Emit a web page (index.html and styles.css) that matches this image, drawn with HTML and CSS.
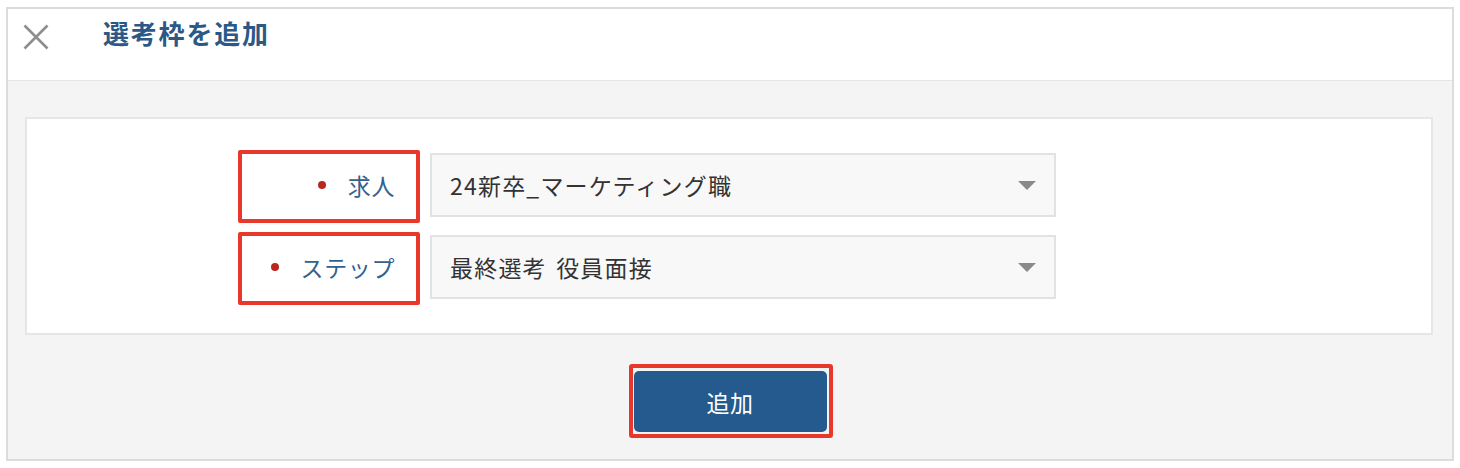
FILE: index.html
```html
<!DOCTYPE html>
<html lang="ja">
<head>
<meta charset="utf-8">
<link rel="stylesheet" href="styles.css">
</head>
<body>
<div class="modal">
  <div class="modal-header">
    <button class="close" aria-label="閉じる">
      <svg width="26" height="26" viewBox="0 0 26 26"><path d="M1.5 1.5 L24.5 24.5 M24.5 1.5 L1.5 24.5" stroke="#8e8e8e" stroke-width="2.6" fill="none"/></svg>
    </button>
    <h1 class="title">選考枠を追加</h1>
  </div>
  <div class="modal-body">
    <div class="card">
      <div class="row">
        <div class="label annotated"><span class="dot"></span>求人</div>
        <div class="select"><span class="value">24新卒_マーケティング職</span><span class="arrow"></span></div>
      </div>
      <div class="row">
        <div class="label annotated"><span class="dot"></span>ステップ</div>
        <div class="select"><span class="value">最終選考 役員面接</span><span class="arrow"></span></div>
      </div>
    </div>
    <div class="actions">
      <button class="submit">追加</button>
    </div>
  </div>
</div>
</body>
</html>
```
FILE: styles.css
```css
* { box-sizing: border-box; }
html, body { margin: 0; padding: 0; background: #fff; }
body {
  padding: 7px 6px;
  font-family: "Noto Sans CJK JP", "Noto Sans", sans-serif;
}
.modal {
  border: 2px solid #dcdcdc;
  background: #fff;
}
.modal-header {
  height: 72px;
  border-bottom: 1px solid #e4e4e4;
  display: flex;
  align-items: flex-start;
  background: #fff;
}
.close {
  margin: 15px 0 0 15px;
  padding: 0;
  width: 26px;
  height: 26px;
  border: none;
  background: none;
  display: block;
}
.close svg { display: block; }
.title {
  margin: 6px 0 0 54px;
  font-size: 26px;
  line-height: 36px;
  font-weight: 700;
  letter-spacing: 1.8px;
  color: #2b5886;
}
.modal-body {
  background: #f4f4f4;
  padding: 36px 19px 27px 17px;
}
.card {
  background: #fff;
  border: 2px solid #e6e6e6;
  padding: 34px 0 34px 211px;
  display: flex;
  flex-direction: column;
  gap: 18px;
}
.row {
  display: flex;
  align-items: stretch;
}
.label {
  width: 182px;
  height: 64px;
  display: flex;
  align-items: center;
  justify-content: flex-end;
  padding-right: 25px;
  font-size: 23px;
  letter-spacing: 0.6px;
  color: #33628f;
  position: relative;
}
.dot {
  width: 8px;
  height: 8px;
  border-radius: 50%;
  background: #b8281f;
  margin-right: 22px;
}
.annotated::after {
  content: "";
  position: absolute;
  top: -3px;
  bottom: -6px;
  left: 0;
  right: 0;
  border: 4px solid #e8372b;
  border-radius: 2px;
}
.select {
  margin-left: 10px;
  width: 626px;
  height: 64px;
  border: 2px solid #e2e2e2;
  background: #f8f8f8;
  display: flex;
  align-items: center;
  justify-content: space-between;
  padding: 0 18px 0 18px;
  font-size: 23px;
  color: #333;
  letter-spacing: 1.2px;
  word-spacing: 3px;
}
.arrow {
  width: 0;
  height: 0;
  border-left: 9px solid transparent;
  border-right: 9px solid transparent;
  border-top: 9px solid #8a8a8a;
}
.actions {
  margin-top: 36px;
  display: flex;
  justify-content: center;
  padding-left: 2px;
}
.submit {
  position: relative;
  width: 193px;
  height: 61px;
  border: none;
  border-radius: 5px;
  background: #255a8e;
  color: #fff;
  font-family: "Noto Sans CJK JP", "Noto Sans", sans-serif;
  font-size: 23px;
  letter-spacing: 0.5px;
  padding: 0;
}
.submit::after {
  content: "";
  position: absolute;
  top: -7px;
  bottom: -6px;
  left: -5px;
  right: -6px;
  border: 4px solid #e8372b;
  border-radius: 3px;
}
```
